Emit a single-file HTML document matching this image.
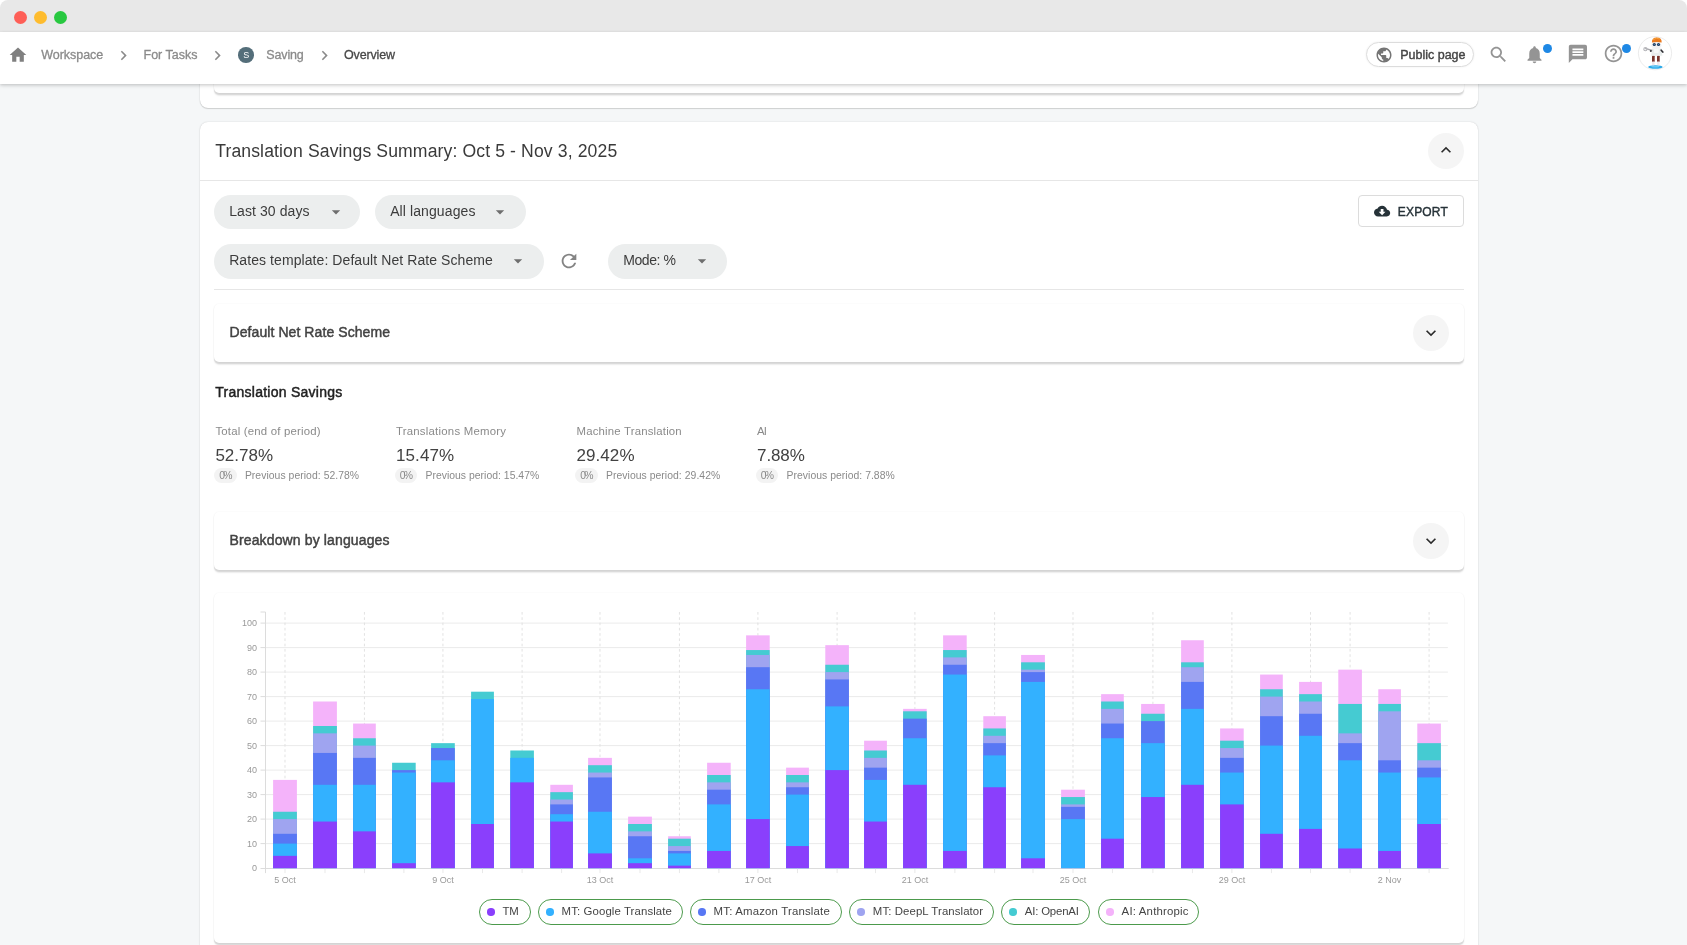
<!DOCTYPE html>
<html lang="en"><head><meta charset="utf-8"><title>Translation Savings Summary</title>
<style>
html,body{margin:0;padding:0;overflow:hidden}
#app{position:absolute;left:0;top:0;width:1687px;height:945px;overflow:hidden;background:#f5f7f8;-webkit-font-smoothing:antialiased}
body{width:1687px;height:945px;overflow:hidden;background:#f5f7f8;position:relative;font-family:'Liberation Sans', sans-serif}
.t{position:absolute;white-space:nowrap;font-family:'Liberation Sans', sans-serif}
.ic{position:absolute;display:block;overflow:visible}
</style></head><body>
<div id="app">
<div style="position:absolute;left:0;top:0;width:1687px;height:20px;background:#fff"></div>
<div style="position:absolute;left:0;top:0;width:1687px;height:32px;background:#e8e8e8;border-radius:8px 8px 0 0"></div>
<div style="position:absolute;left:13.5px;top:10.5px;width:13px;height:13px;border-radius:50%;background:#fe5f57"></div>
<div style="position:absolute;left:33.5px;top:10.5px;width:13px;height:13px;border-radius:50%;background:#febc2e"></div>
<div style="position:absolute;left:53.5px;top:10.5px;width:13px;height:13px;border-radius:50%;background:#28c840"></div>
<div style="position:absolute;left:200px;top:40px;width:1278px;height:68px;background:#fff;border-radius:0 0 8px 8px;box-shadow:0 1px 1px rgba(0,0,0,.13),0 0 1.5px rgba(0,0,0,.2)"></div>
<div style="position:absolute;left:214px;top:40px;width:1250px;height:53px;background:#fff;border-radius:0 0 5px 5px;box-shadow:0 1.5px 1px rgba(0,0,0,.09),0 2.5px 1.5px rgba(0,0,0,.07),0 0 2px rgba(0,0,0,.06)"></div>
<div style="position:absolute;left:200px;top:122px;width:1278px;height:900px;background:#fff;border-radius:8px;box-shadow:0 1px 1px rgba(0,0,0,.13),0 0 1.5px rgba(0,0,0,.2)"></div>
<div style="position:absolute;left:0;top:32px;width:1687px;height:52px;background:#fff;box-shadow:0 1px 3px rgba(0,0,0,.16),0 2px 5px rgba(0,0,0,.08)"></div>
<svg class="ic" style="left:8px;top:45px" width="20" height="20" viewBox="0 0 24 24" ><path fill="#808080" d="M10 20v-6h4v6h5v-8h3L12 3 2 12h3v8z"/></svg>
<svg class="ic" style="left:114px;top:45.5px" width="19" height="19" viewBox="0 0 24 24" ><path fill="#8a8a8a" d="M10 6L8.59 7.41 13.17 12l-4.58 4.59L10 18l6-6z"/></svg>
<svg class="ic" style="left:208px;top:45.5px" width="19" height="19" viewBox="0 0 24 24" ><path fill="#8a8a8a" d="M10 6L8.59 7.41 13.17 12l-4.58 4.59L10 18l6-6z"/></svg>
<div style="position:absolute;left:238.2px;top:47.1px;width:15.6px;height:15.6px;border-radius:50%;background:#546e7a"></div>
<svg class="ic" style="left:314.5px;top:45.5px" width="19" height="19" viewBox="0 0 24 24" ><path fill="#8a8a8a" d="M10 6L8.59 7.41 13.17 12l-4.58 4.59L10 18l6-6z"/></svg>
<div style="position:absolute;left:1366px;top:42px;width:106px;height:23px;border:1px solid #dcdcdc;border-radius:13px;box-shadow:0 0 2px rgba(0,0,0,.08)"></div>
<svg class="ic" style="left:1374.8px;top:45.8px" width="18" height="18" viewBox="0 0 24 24" ><path fill="#757575" d="M12 2C6.48 2 2 6.48 2 12s4.48 10 10 10 10-4.48 10-10S17.52 2 12 2zm-1 17.93c-3.95-.49-7-3.85-7-7.93 0-.62.08-1.21.21-1.79L9 15v1c0 1.1.9 2 2 2v1.93zm6.9-2.54c-.26-.81-1-1.39-1.9-1.39h-1v-3c0-.55-.45-1-1-1H8v-2h2c.55 0 1-.45 1-1V7h2c1.1 0 2-.9 2-2v-.41c2.93 1.19 5 4.06 5 7.41 0 2.08-.8 3.97-2.1 5.39z"/></svg>
<svg class="ic" style="left:1487.7px;top:43.5px" width="21" height="21" viewBox="0 0 24 24" ><path fill="#949494" d="M15.5 14h-.79l-.28-.27C15.41 12.59 16 11.11 16 9.5 16 5.91 13.09 3 9.5 3S3 5.91 3 9.5 5.91 16 9.5 16c1.61 0 3.09-.59 4.23-1.57l.27.28v.79l5 4.99L20.49 19l-4.99-5zm-6 0C7.01 14 5 11.99 5 9.5S7.01 5 9.5 5 14 7.01 14 9.5 11.99 14 9.5 14z"/></svg>
<svg class="ic" style="left:1523.7px;top:44px" width="21" height="21" viewBox="0 0 24 24" ><path fill="#949494" d="M12 22c1.1 0 2-.9 2-2h-4c0 1.1.89 2 2 2zm6-6v-5c0-3.07-1.64-5.64-4.5-6.32V4c0-.83-.67-1.5-1.5-1.5s-1.5.67-1.5 1.5v.68C7.63 5.36 6 7.92 6 11v5l-2 2v1h16v-1l-2-2z"/></svg>
<div style="position:absolute;left:1543px;top:44px;width:9px;height:9px;border-radius:50%;background:#1e88e5"></div>
<svg class="ic" style="left:1566.6px;top:43.2px" width="21.8" height="21.8" viewBox="0 0 24 24" ><path fill="#949494" d="M20 2H4c-1.1 0-1.99.9-1.99 2L2 22l4-4h14c1.1 0 2-.9 2-2V4c0-1.1-.9-2-2-2zM6 9h12v2H6V9zm12 5H6v-2h12v2zm0-6H6V6h12v2z"/></svg>
<svg class="ic" style="left:1603px;top:43.3px" width="21" height="21" viewBox="0 0 24 24" ><path fill="#949494" d="M11 18h2v-2h-2v2zm1-16C6.48 2 2 6.48 2 12s4.48 10 10 10 10-4.48 10-10S17.52 2 12 2zm0 18c-4.41 0-8-3.59-8-8s3.59-8 8-8 8 3.59 8 8-3.59 8-8 8zm0-14c-2.21 0-4 1.79-4 4h2c0-1.1.9-2 2-2s2 .9 2 2c0 2-3 1.75-3 5h2c0-2.25 3-2.5 3-5 0-2.21-1.79-4-4-4z"/></svg>
<div style="position:absolute;left:1622.3px;top:44px;width:9px;height:9px;border-radius:50%;background:#1e88e5"></div>
<svg class="ic" style="left:1638px;top:36px" width="34" height="34.5" viewBox="0 0 34 34.5">
<circle cx="17" cy="17.2" r="16.6" fill="#fff" stroke="#ececec" stroke-width="1"/>
<ellipse cx="17.4" cy="31" rx="7.2" ry="1.7" fill="#2aa9e9"/>
<ellipse cx="17.4" cy="30.6" rx="4" ry="1" fill="#66c6f2"/>
<rect x="14" y="19.5" width="2.7" height="6.6" rx=".8" fill="#7a342c"/><rect x="19" y="19.5" width="2.7" height="6.6" rx=".8" fill="#7a342c"/>
<rect x="14.1" y="25.6" width="2.5" height="3.6" rx=".8" fill="#efe6ea"/><rect x="19.1" y="25.6" width="2.5" height="3.6" rx=".8" fill="#efe6ea"/>
<path d="M14 12.5 h9.6 l.8 7.2 h-11.2 z" fill="#e9eded"/>
<rect x="15.8" y="13" width="5" height="4" rx="1" fill="#f6f8f8"/>
<path d="M13.6 14.3 L7.8 12.6" stroke="#a9a9ad" stroke-width="1.5" fill="none" stroke-linecap="round"/>
<circle cx="7.4" cy="13.2" r="1.6" fill="none" stroke="#b5b5b9" stroke-width="1.1"/>
<circle cx="12.8" cy="14.9" r="1" fill="#3a3a40"/>
<path d="M23.2 14.2 l1.6 1.8" stroke="#2e2e34" stroke-width="1.7" stroke-linecap="round"/>
<ellipse cx="18.4" cy="9.2" rx="5" ry="3.9" fill="#f1f1f3"/>
<circle cx="16.3" cy="8.5" r="1.6" fill="#1f3a5c"/><circle cx="20.5" cy="8.5" r="1.6" fill="#1f3a5c"/>
<circle cx="16.3" cy="8.5" r=".6" fill="#4f86b8"/><circle cx="20.5" cy="8.5" r=".6" fill="#4f86b8"/>
<path d="M13.9 6.6 q-.2 -5 4.9 -5 q5.1 0 4.9 5 q-4.9 -1.2 -9.8 0z" fill="#ea7a1e"/>
<path d="M15.4 3.4 q3 -2.2 6 -.6" stroke="#f6a23a" stroke-width="1" fill="none" stroke-linecap="round"/>
</svg>
<div style="position:absolute;left:200px;top:180px;width:1278px;height:1px;background:#e6e6e6"></div>
<div style="position:absolute;left:1428.4px;top:132.6px;width:36px;height:36px;border-radius:50%;background:#f5f5f5"></div>
<svg class="ic" style="left:1436px;top:139.5px" width="20" height="20" viewBox="0 0 24 24" ><path fill="#2b2b2b" d="M12 8l-6 6 1.41 1.41L12 10.83l4.59 4.58L18 14z"/></svg>
<div style="position:absolute;left:214px;top:195px;width:146px;height:34px;border-radius:17.25px;background:#eceeee"></div>
<svg class="ic" style="left:325.5px;top:201.5px" width="20" height="20" viewBox="0 0 24 24" ><path fill="#6e6e6e" d="M7 10l5 5 5-5z"/></svg>
<div style="position:absolute;left:375px;top:195px;width:151px;height:34px;border-radius:17.25px;background:#eceeee"></div>
<svg class="ic" style="left:490.4px;top:201.5px" width="20" height="20" viewBox="0 0 24 24" ><path fill="#6e6e6e" d="M7 10l5 5 5-5z"/></svg>
<div style="position:absolute;left:214px;top:244px;width:330px;height:34.5px;border-radius:17.25px;background:#eceeee"></div>
<svg class="ic" style="left:508.20000000000005px;top:250.5px" width="20" height="20" viewBox="0 0 24 24" ><path fill="#6e6e6e" d="M7 10l5 5 5-5z"/></svg>
<div style="position:absolute;left:608px;top:244px;width:119px;height:34.5px;border-radius:17.25px;background:#eceeee"></div>
<svg class="ic" style="left:692.2px;top:250.5px" width="20" height="20" viewBox="0 0 24 24" ><path fill="#6e6e6e" d="M7 10l5 5 5-5z"/></svg>
<svg class="ic" style="left:558px;top:250.3px" width="22" height="22" viewBox="0 0 24 24" ><path fill="#848484" d="M17.65 6.35C16.2 4.9 14.21 4 12 4c-4.42 0-7.99 3.58-7.99 8s3.57 8 7.99 8c3.73 0 6.84-2.55 7.73-6h-2.08c-.82 2.33-3.04 4-5.65 4-3.31 0-6-2.69-6-6s2.69-6 6-6c1.66 0 3.14.69 4.22 1.78L13 11h7V4l-2.35 2.35z"/></svg>
<div style="position:absolute;left:1358px;top:195px;width:104px;height:30px;border:1px solid #dcdcdc;border-radius:4px"></div>
<svg class="ic" style="left:1374px;top:202.5px" width="16.2" height="16.2" viewBox="0 0 24 24" ><path fill="#263238" d="M19.35 10.04C18.67 6.59 15.64 4 12 4 9.11 4 6.6 5.64 5.35 8.04 2.34 8.36 0 10.91 0 14c0 3.31 2.69 6 6 6h13c2.76 0 5-2.24 5-5 0-2.64-2.05-4.78-4.65-4.96zM17 13l-5 5-5-5h3V9h4v4h3z"/></svg>
<div style="position:absolute;left:214px;top:289px;width:1250px;height:1px;background:#e6e6e6"></div>
<div style="position:absolute;left:214px;top:304px;width:1250px;height:58px;background:#fff;border-radius:5px;box-shadow:0 1.5px 1px rgba(0,0,0,.09),0 2.5px 1.5px rgba(0,0,0,.07),0 0 2px rgba(0,0,0,.06)"></div>
<div style="position:absolute;left:1413px;top:314.5px;width:36px;height:36px;border-radius:50%;background:#f5f5f5"></div>
<svg class="ic" style="left:1421px;top:322.8px" width="20" height="20" viewBox="0 0 24 24" ><path fill="#2b2b2b" d="M16.59 8.59L12 13.17 7.41 8.59 6 10l6 6 6-6z"/></svg>
<div style="position:absolute;left:214px;top:512px;width:1250px;height:58px;background:#fff;border-radius:5px;box-shadow:0 1.5px 1px rgba(0,0,0,.09),0 2.5px 1.5px rgba(0,0,0,.07),0 0 2px rgba(0,0,0,.06)"></div>
<div style="position:absolute;left:1413px;top:522.5px;width:36px;height:36px;border-radius:50%;background:#f5f5f5"></div>
<svg class="ic" style="left:1421px;top:530.8px" width="20" height="20" viewBox="0 0 24 24" ><path fill="#2b2b2b" d="M16.59 8.59L12 13.17 7.41 8.59 6 10l6 6 6-6z"/></svg>
<div style="position:absolute;left:214.2px;top:468.3px;width:22.5px;height:15px;border-radius:7.5px;background:#f3f3f3"></div>
<div style="position:absolute;left:394.8px;top:468.3px;width:22.5px;height:15px;border-radius:7.5px;background:#f3f3f3"></div>
<div style="position:absolute;left:575.3px;top:468.3px;width:22.5px;height:15px;border-radius:7.5px;background:#f3f3f3"></div>
<div style="position:absolute;left:755.9px;top:468.3px;width:22.5px;height:15px;border-radius:7.5px;background:#f3f3f3"></div>
<div style="position:absolute;left:214px;top:592.7px;width:1250px;height:350.3px;background:#fff;border-radius:5px;box-shadow:0 1.5px 1px rgba(0,0,0,.09),0 2.5px 1.5px rgba(0,0,0,.07),0 0 2px rgba(0,0,0,.06)"></div>
<svg class="ic" style="left:0;top:0;will-change:transform" width="1687" height="945" viewBox="0 0 1687 945" font-family="Liberation Sans, sans-serif">
<line x1="265.5" x2="1447.9" y1="843.60" y2="843.60" stroke="#ebebeb" stroke-width="1"/>
<line x1="265.5" x2="1447.9" y1="819.10" y2="819.10" stroke="#ebebeb" stroke-width="1"/>
<line x1="265.5" x2="1447.9" y1="794.60" y2="794.60" stroke="#ebebeb" stroke-width="1"/>
<line x1="265.5" x2="1447.9" y1="770.10" y2="770.10" stroke="#ebebeb" stroke-width="1"/>
<line x1="265.5" x2="1447.9" y1="745.60" y2="745.60" stroke="#ebebeb" stroke-width="1"/>
<line x1="265.5" x2="1447.9" y1="721.10" y2="721.10" stroke="#ebebeb" stroke-width="1"/>
<line x1="265.5" x2="1447.9" y1="696.60" y2="696.60" stroke="#ebebeb" stroke-width="1"/>
<line x1="265.5" x2="1447.9" y1="672.10" y2="672.10" stroke="#ebebeb" stroke-width="1"/>
<line x1="265.5" x2="1447.9" y1="647.60" y2="647.60" stroke="#ebebeb" stroke-width="1"/>
<line x1="265.5" x2="1447.9" y1="623.10" y2="623.10" stroke="#ebebeb" stroke-width="1"/>
<line x1="285.00" x2="285.00" y1="612" y2="868.1" stroke="#dedede" stroke-width=".88" stroke-dasharray="2.64 2.64"/>
<line x1="364.45" x2="364.45" y1="612" y2="868.1" stroke="#dedede" stroke-width=".88" stroke-dasharray="2.64 2.64"/>
<line x1="442.95" x2="442.95" y1="612" y2="868.1" stroke="#dedede" stroke-width=".88" stroke-dasharray="2.64 2.64"/>
<line x1="522.10" x2="522.10" y1="612" y2="868.1" stroke="#dedede" stroke-width=".88" stroke-dasharray="2.64 2.64"/>
<line x1="600.00" x2="600.00" y1="612" y2="868.1" stroke="#dedede" stroke-width=".88" stroke-dasharray="2.64 2.64"/>
<line x1="679.45" x2="679.45" y1="612" y2="868.1" stroke="#dedede" stroke-width=".88" stroke-dasharray="2.64 2.64"/>
<line x1="757.90" x2="757.90" y1="612" y2="868.1" stroke="#dedede" stroke-width=".88" stroke-dasharray="2.64 2.64"/>
<line x1="837.10" x2="837.10" y1="612" y2="868.1" stroke="#dedede" stroke-width=".88" stroke-dasharray="2.64 2.64"/>
<line x1="914.90" x2="914.90" y1="612" y2="868.1" stroke="#dedede" stroke-width=".88" stroke-dasharray="2.64 2.64"/>
<line x1="994.60" x2="994.60" y1="612" y2="868.1" stroke="#dedede" stroke-width=".88" stroke-dasharray="2.64 2.64"/>
<line x1="1073.00" x2="1073.00" y1="612" y2="868.1" stroke="#dedede" stroke-width=".88" stroke-dasharray="2.64 2.64"/>
<line x1="1152.90" x2="1152.90" y1="612" y2="868.1" stroke="#dedede" stroke-width=".88" stroke-dasharray="2.64 2.64"/>
<line x1="1231.90" x2="1231.90" y1="612" y2="868.1" stroke="#dedede" stroke-width=".88" stroke-dasharray="2.64 2.64"/>
<line x1="1310.50" x2="1310.50" y1="612" y2="868.1" stroke="#dedede" stroke-width=".88" stroke-dasharray="2.64 2.64"/>
<line x1="1350.10" x2="1350.10" y1="612" y2="868.1" stroke="#dedede" stroke-width=".88" stroke-dasharray="2.64 2.64"/>
<line x1="1429.10" x2="1429.10" y1="612" y2="868.1" stroke="#dedede" stroke-width=".88" stroke-dasharray="2.64 2.64"/>
<line x1="265.5" x2="265.5" y1="612" y2="873.1" stroke="#dcdcdc" stroke-width="1"/>
<line x1="260.5" x2="1448.7" y1="868.5" y2="868.5" stroke="#dcdcdc" stroke-width="1"/>
<line x1="260.5" x2="265.5" y1="612" y2="612" stroke="#dcdcdc" stroke-width="1"/>
<line x1="260.5" x2="265.5" y1="843.60" y2="843.60" stroke="#dcdcdc" stroke-width="1"/>
<line x1="260.5" x2="265.5" y1="819.10" y2="819.10" stroke="#dcdcdc" stroke-width="1"/>
<line x1="260.5" x2="265.5" y1="794.60" y2="794.60" stroke="#dcdcdc" stroke-width="1"/>
<line x1="260.5" x2="265.5" y1="770.10" y2="770.10" stroke="#dcdcdc" stroke-width="1"/>
<line x1="260.5" x2="265.5" y1="745.60" y2="745.60" stroke="#dcdcdc" stroke-width="1"/>
<line x1="260.5" x2="265.5" y1="721.10" y2="721.10" stroke="#dcdcdc" stroke-width="1"/>
<line x1="260.5" x2="265.5" y1="696.60" y2="696.60" stroke="#dcdcdc" stroke-width="1"/>
<line x1="260.5" x2="265.5" y1="672.10" y2="672.10" stroke="#dcdcdc" stroke-width="1"/>
<line x1="260.5" x2="265.5" y1="647.60" y2="647.60" stroke="#dcdcdc" stroke-width="1"/>
<line x1="260.5" x2="265.5" y1="623.10" y2="623.10" stroke="#dcdcdc" stroke-width="1"/>
<line x1="285.00" x2="285.00" y1="868.1" y2="873.1" stroke="#e9e9e9" stroke-width="1"/>
<line x1="325.00" x2="325.00" y1="868.1" y2="873.1" stroke="#e9e9e9" stroke-width="1"/>
<line x1="364.45" x2="364.45" y1="868.1" y2="873.1" stroke="#e9e9e9" stroke-width="1"/>
<line x1="403.90" x2="403.90" y1="868.1" y2="873.1" stroke="#e9e9e9" stroke-width="1"/>
<line x1="442.95" x2="442.95" y1="868.1" y2="873.1" stroke="#e9e9e9" stroke-width="1"/>
<line x1="482.50" x2="482.50" y1="868.1" y2="873.1" stroke="#e9e9e9" stroke-width="1"/>
<line x1="522.10" x2="522.10" y1="868.1" y2="873.1" stroke="#e9e9e9" stroke-width="1"/>
<line x1="561.60" x2="561.60" y1="868.1" y2="873.1" stroke="#e9e9e9" stroke-width="1"/>
<line x1="600.00" x2="600.00" y1="868.1" y2="873.1" stroke="#e9e9e9" stroke-width="1"/>
<line x1="640.00" x2="640.00" y1="868.1" y2="873.1" stroke="#e9e9e9" stroke-width="1"/>
<line x1="679.45" x2="679.45" y1="868.1" y2="873.1" stroke="#e9e9e9" stroke-width="1"/>
<line x1="718.90" x2="718.90" y1="868.1" y2="873.1" stroke="#e9e9e9" stroke-width="1"/>
<line x1="757.90" x2="757.90" y1="868.1" y2="873.1" stroke="#e9e9e9" stroke-width="1"/>
<line x1="797.50" x2="797.50" y1="868.1" y2="873.1" stroke="#e9e9e9" stroke-width="1"/>
<line x1="837.10" x2="837.10" y1="868.1" y2="873.1" stroke="#e9e9e9" stroke-width="1"/>
<line x1="875.50" x2="875.50" y1="868.1" y2="873.1" stroke="#e9e9e9" stroke-width="1"/>
<line x1="914.90" x2="914.90" y1="868.1" y2="873.1" stroke="#e9e9e9" stroke-width="1"/>
<line x1="954.90" x2="954.90" y1="868.1" y2="873.1" stroke="#e9e9e9" stroke-width="1"/>
<line x1="994.60" x2="994.60" y1="868.1" y2="873.1" stroke="#e9e9e9" stroke-width="1"/>
<line x1="1033.00" x2="1033.00" y1="868.1" y2="873.1" stroke="#e9e9e9" stroke-width="1"/>
<line x1="1073.00" x2="1073.00" y1="868.1" y2="873.1" stroke="#e9e9e9" stroke-width="1"/>
<line x1="1112.45" x2="1112.45" y1="868.1" y2="873.1" stroke="#e9e9e9" stroke-width="1"/>
<line x1="1152.90" x2="1152.90" y1="868.1" y2="873.1" stroke="#e9e9e9" stroke-width="1"/>
<line x1="1192.45" x2="1192.45" y1="868.1" y2="873.1" stroke="#e9e9e9" stroke-width="1"/>
<line x1="1231.90" x2="1231.90" y1="868.1" y2="873.1" stroke="#e9e9e9" stroke-width="1"/>
<line x1="1271.45" x2="1271.45" y1="868.1" y2="873.1" stroke="#e9e9e9" stroke-width="1"/>
<line x1="1310.50" x2="1310.50" y1="868.1" y2="873.1" stroke="#e9e9e9" stroke-width="1"/>
<line x1="1350.10" x2="1350.10" y1="868.1" y2="873.1" stroke="#e9e9e9" stroke-width="1"/>
<line x1="1389.60" x2="1389.60" y1="868.1" y2="873.1" stroke="#e9e9e9" stroke-width="1"/>
<line x1="1429.10" x2="1429.10" y1="868.1" y2="873.1" stroke="#e9e9e9" stroke-width="1"/>
<rect x="273.1" y="779.90" width="23.8" height="88.20" fill="#f4b3fa"/>
<rect x="273.1" y="811.75" width="23.8" height="56.35" fill="#45cbd2"/>
<rect x="273.1" y="819.10" width="23.8" height="49.00" fill="#9fa4f0"/>
<rect x="273.1" y="833.80" width="23.8" height="34.30" fill="#5877f4"/>
<rect x="273.1" y="843.60" width="23.8" height="24.50" fill="#33b1ff"/>
<rect x="273.1" y="855.85" width="23.8" height="12.25" fill="#8a3ffc"/>
<rect x="313.1" y="701.50" width="23.8" height="166.60" fill="#f4b3fa"/>
<rect x="313.1" y="726.00" width="23.8" height="142.10" fill="#45cbd2"/>
<rect x="313.1" y="733.35" width="23.8" height="134.75" fill="#9fa4f0"/>
<rect x="313.1" y="752.95" width="23.8" height="115.15" fill="#5877f4"/>
<rect x="313.1" y="784.80" width="23.8" height="83.30" fill="#33b1ff"/>
<rect x="313.1" y="821.55" width="23.8" height="46.55" fill="#8a3ffc"/>
<rect x="353.1" y="723.55" width="22.7" height="144.55" fill="#f4b3fa"/>
<rect x="353.1" y="738.25" width="22.7" height="129.85" fill="#45cbd2"/>
<rect x="353.1" y="745.60" width="22.7" height="122.50" fill="#9fa4f0"/>
<rect x="353.1" y="757.85" width="22.7" height="110.25" fill="#5877f4"/>
<rect x="353.1" y="784.80" width="22.7" height="83.30" fill="#33b1ff"/>
<rect x="353.1" y="831.35" width="22.7" height="36.75" fill="#8a3ffc"/>
<rect x="392.1" y="762.75" width="23.6" height="105.35" fill="#45cbd2"/>
<rect x="392.1" y="770.10" width="23.6" height="98.00" fill="#5877f4"/>
<rect x="392.1" y="772.55" width="23.6" height="95.55" fill="#33b1ff"/>
<rect x="392.1" y="863.20" width="23.6" height="4.90" fill="#8a3ffc"/>
<rect x="431.1" y="743.15" width="23.7" height="124.95" fill="#45cbd2"/>
<rect x="431.1" y="748.05" width="23.7" height="120.05" fill="#5877f4"/>
<rect x="431.1" y="760.30" width="23.7" height="107.80" fill="#33b1ff"/>
<rect x="431.1" y="782.35" width="23.7" height="85.75" fill="#8a3ffc"/>
<rect x="471.1" y="691.70" width="22.8" height="176.40" fill="#45cbd2"/>
<rect x="471.1" y="699.05" width="22.8" height="169.05" fill="#33b1ff"/>
<rect x="471.1" y="824.00" width="22.8" height="44.10" fill="#8a3ffc"/>
<rect x="510.3" y="750.50" width="23.6" height="117.60" fill="#45cbd2"/>
<rect x="510.3" y="757.85" width="23.6" height="110.25" fill="#33b1ff"/>
<rect x="510.3" y="782.35" width="23.6" height="85.75" fill="#8a3ffc"/>
<rect x="550.3" y="784.80" width="22.6" height="83.30" fill="#f4b3fa"/>
<rect x="550.3" y="792.15" width="22.6" height="75.95" fill="#45cbd2"/>
<rect x="550.3" y="799.50" width="22.6" height="68.60" fill="#9fa4f0"/>
<rect x="550.3" y="804.40" width="22.6" height="63.70" fill="#5877f4"/>
<rect x="550.3" y="814.20" width="22.6" height="53.90" fill="#33b1ff"/>
<rect x="550.3" y="821.55" width="22.6" height="46.55" fill="#8a3ffc"/>
<rect x="588.1" y="757.85" width="23.8" height="110.25" fill="#f4b3fa"/>
<rect x="588.1" y="765.20" width="23.8" height="102.90" fill="#45cbd2"/>
<rect x="588.1" y="772.55" width="23.8" height="95.55" fill="#9fa4f0"/>
<rect x="588.1" y="777.45" width="23.8" height="90.65" fill="#5877f4"/>
<rect x="588.1" y="811.75" width="23.8" height="56.35" fill="#33b1ff"/>
<rect x="588.1" y="853.40" width="23.8" height="14.70" fill="#8a3ffc"/>
<rect x="628.1" y="816.65" width="23.8" height="51.45" fill="#f4b3fa"/>
<rect x="628.1" y="824.00" width="23.8" height="44.10" fill="#45cbd2"/>
<rect x="628.1" y="831.35" width="23.8" height="36.75" fill="#9fa4f0"/>
<rect x="628.1" y="836.25" width="23.8" height="31.85" fill="#5877f4"/>
<rect x="628.1" y="858.30" width="23.8" height="9.80" fill="#33b1ff"/>
<rect x="628.1" y="863.20" width="23.8" height="4.90" fill="#8a3ffc"/>
<rect x="668.1" y="836.25" width="22.7" height="31.85" fill="#f4b3fa"/>
<rect x="668.1" y="838.70" width="22.7" height="29.40" fill="#45cbd2"/>
<rect x="668.1" y="846.05" width="22.7" height="22.05" fill="#9fa4f0"/>
<rect x="668.1" y="850.95" width="22.7" height="17.15" fill="#5877f4"/>
<rect x="668.1" y="853.40" width="22.7" height="14.70" fill="#33b1ff"/>
<rect x="668.1" y="865.65" width="22.7" height="2.45" fill="#8a3ffc"/>
<rect x="707.1" y="762.75" width="23.6" height="105.35" fill="#f4b3fa"/>
<rect x="707.1" y="775.00" width="23.6" height="93.10" fill="#45cbd2"/>
<rect x="707.1" y="782.35" width="23.6" height="85.75" fill="#9fa4f0"/>
<rect x="707.1" y="789.70" width="23.6" height="78.40" fill="#5877f4"/>
<rect x="707.1" y="804.40" width="23.6" height="63.70" fill="#33b1ff"/>
<rect x="707.1" y="850.95" width="23.6" height="17.15" fill="#8a3ffc"/>
<rect x="746.1" y="635.35" width="23.6" height="232.75" fill="#f4b3fa"/>
<rect x="746.1" y="650.05" width="23.6" height="218.05" fill="#45cbd2"/>
<rect x="746.1" y="654.95" width="23.6" height="213.15" fill="#9fa4f0"/>
<rect x="746.1" y="667.20" width="23.6" height="200.90" fill="#5877f4"/>
<rect x="746.1" y="689.25" width="23.6" height="178.85" fill="#33b1ff"/>
<rect x="746.1" y="819.10" width="23.6" height="49.00" fill="#8a3ffc"/>
<rect x="786.1" y="767.65" width="22.8" height="100.45" fill="#f4b3fa"/>
<rect x="786.1" y="775.00" width="22.8" height="93.10" fill="#45cbd2"/>
<rect x="786.1" y="782.35" width="22.8" height="85.75" fill="#9fa4f0"/>
<rect x="786.1" y="787.25" width="22.8" height="80.85" fill="#5877f4"/>
<rect x="786.1" y="794.60" width="22.8" height="73.50" fill="#33b1ff"/>
<rect x="786.1" y="846.05" width="22.8" height="22.05" fill="#8a3ffc"/>
<rect x="825.3" y="645.15" width="23.6" height="222.95" fill="#f4b3fa"/>
<rect x="825.3" y="664.75" width="23.6" height="203.35" fill="#45cbd2"/>
<rect x="825.3" y="672.10" width="23.6" height="196.00" fill="#9fa4f0"/>
<rect x="825.3" y="679.45" width="23.6" height="188.65" fill="#5877f4"/>
<rect x="825.3" y="706.40" width="23.6" height="161.70" fill="#33b1ff"/>
<rect x="825.3" y="770.10" width="23.6" height="98.00" fill="#8a3ffc"/>
<rect x="864.1" y="740.70" width="22.8" height="127.40" fill="#f4b3fa"/>
<rect x="864.1" y="750.50" width="22.8" height="117.60" fill="#45cbd2"/>
<rect x="864.1" y="757.85" width="22.8" height="110.25" fill="#9fa4f0"/>
<rect x="864.1" y="767.65" width="22.8" height="100.45" fill="#5877f4"/>
<rect x="864.1" y="779.90" width="22.8" height="88.20" fill="#33b1ff"/>
<rect x="864.1" y="821.55" width="22.8" height="46.55" fill="#8a3ffc"/>
<rect x="903.1" y="708.85" width="23.6" height="159.25" fill="#f4b3fa"/>
<rect x="903.1" y="711.30" width="23.6" height="156.80" fill="#45cbd2"/>
<rect x="903.1" y="718.65" width="23.6" height="149.45" fill="#5877f4"/>
<rect x="903.1" y="738.25" width="23.6" height="129.85" fill="#33b1ff"/>
<rect x="903.1" y="784.80" width="23.6" height="83.30" fill="#8a3ffc"/>
<rect x="943.1" y="635.35" width="23.6" height="232.75" fill="#f4b3fa"/>
<rect x="943.1" y="650.05" width="23.6" height="218.05" fill="#45cbd2"/>
<rect x="943.1" y="657.40" width="23.6" height="210.70" fill="#9fa4f0"/>
<rect x="943.1" y="664.75" width="23.6" height="203.35" fill="#5877f4"/>
<rect x="943.1" y="674.55" width="23.6" height="193.55" fill="#33b1ff"/>
<rect x="943.1" y="850.95" width="23.6" height="17.15" fill="#8a3ffc"/>
<rect x="983.3" y="716.20" width="22.6" height="151.90" fill="#f4b3fa"/>
<rect x="983.3" y="728.45" width="22.6" height="139.65" fill="#45cbd2"/>
<rect x="983.3" y="735.80" width="22.6" height="132.30" fill="#9fa4f0"/>
<rect x="983.3" y="743.15" width="22.6" height="124.95" fill="#5877f4"/>
<rect x="983.3" y="755.40" width="22.6" height="112.70" fill="#33b1ff"/>
<rect x="983.3" y="787.25" width="22.6" height="80.85" fill="#8a3ffc"/>
<rect x="1021.1" y="654.95" width="23.8" height="213.15" fill="#f4b3fa"/>
<rect x="1021.1" y="662.30" width="23.8" height="205.80" fill="#45cbd2"/>
<rect x="1021.1" y="669.65" width="23.8" height="198.45" fill="#9fa4f0"/>
<rect x="1021.1" y="672.10" width="23.8" height="196.00" fill="#5877f4"/>
<rect x="1021.1" y="681.90" width="23.8" height="186.20" fill="#33b1ff"/>
<rect x="1021.1" y="858.30" width="23.8" height="9.80" fill="#8a3ffc"/>
<rect x="1061.1" y="789.70" width="23.8" height="78.40" fill="#f4b3fa"/>
<rect x="1061.1" y="797.05" width="23.8" height="71.05" fill="#45cbd2"/>
<rect x="1061.1" y="804.40" width="23.8" height="63.70" fill="#9fa4f0"/>
<rect x="1061.1" y="806.85" width="23.8" height="61.25" fill="#5877f4"/>
<rect x="1061.1" y="819.10" width="23.8" height="49.00" fill="#33b1ff"/>
<rect x="1101.1" y="694.15" width="22.7" height="173.95" fill="#f4b3fa"/>
<rect x="1101.1" y="701.50" width="22.7" height="166.60" fill="#45cbd2"/>
<rect x="1101.1" y="708.85" width="22.7" height="159.25" fill="#9fa4f0"/>
<rect x="1101.1" y="723.55" width="22.7" height="144.55" fill="#5877f4"/>
<rect x="1101.1" y="738.25" width="22.7" height="129.85" fill="#33b1ff"/>
<rect x="1101.1" y="838.70" width="22.7" height="29.40" fill="#8a3ffc"/>
<rect x="1141.1" y="703.95" width="23.6" height="164.15" fill="#f4b3fa"/>
<rect x="1141.1" y="713.75" width="23.6" height="154.35" fill="#45cbd2"/>
<rect x="1141.1" y="721.10" width="23.6" height="147.00" fill="#5877f4"/>
<rect x="1141.1" y="743.15" width="23.6" height="124.95" fill="#33b1ff"/>
<rect x="1141.1" y="797.05" width="23.6" height="71.05" fill="#8a3ffc"/>
<rect x="1181.1" y="640.25" width="22.7" height="227.85" fill="#f4b3fa"/>
<rect x="1181.1" y="662.30" width="22.7" height="205.80" fill="#45cbd2"/>
<rect x="1181.1" y="667.20" width="22.7" height="200.90" fill="#9fa4f0"/>
<rect x="1181.1" y="681.90" width="22.7" height="186.20" fill="#5877f4"/>
<rect x="1181.1" y="708.85" width="22.7" height="159.25" fill="#33b1ff"/>
<rect x="1181.1" y="784.80" width="22.7" height="83.30" fill="#8a3ffc"/>
<rect x="1220.1" y="728.45" width="23.6" height="139.65" fill="#f4b3fa"/>
<rect x="1220.1" y="740.70" width="23.6" height="127.40" fill="#45cbd2"/>
<rect x="1220.1" y="748.05" width="23.6" height="120.05" fill="#9fa4f0"/>
<rect x="1220.1" y="757.85" width="23.6" height="110.25" fill="#5877f4"/>
<rect x="1220.1" y="772.55" width="23.6" height="95.55" fill="#33b1ff"/>
<rect x="1220.1" y="804.40" width="23.6" height="63.70" fill="#8a3ffc"/>
<rect x="1260.1" y="674.55" width="22.7" height="193.55" fill="#f4b3fa"/>
<rect x="1260.1" y="689.25" width="22.7" height="178.85" fill="#45cbd2"/>
<rect x="1260.1" y="696.60" width="22.7" height="171.50" fill="#9fa4f0"/>
<rect x="1260.1" y="716.20" width="22.7" height="151.90" fill="#5877f4"/>
<rect x="1260.1" y="745.60" width="22.7" height="122.50" fill="#33b1ff"/>
<rect x="1260.1" y="833.80" width="22.7" height="34.30" fill="#8a3ffc"/>
<rect x="1299.1" y="681.90" width="22.8" height="186.20" fill="#f4b3fa"/>
<rect x="1299.1" y="694.15" width="22.8" height="173.95" fill="#45cbd2"/>
<rect x="1299.1" y="701.50" width="22.8" height="166.60" fill="#9fa4f0"/>
<rect x="1299.1" y="713.75" width="22.8" height="154.35" fill="#5877f4"/>
<rect x="1299.1" y="735.80" width="22.8" height="132.30" fill="#33b1ff"/>
<rect x="1299.1" y="828.90" width="22.8" height="39.20" fill="#8a3ffc"/>
<rect x="1338.3" y="669.65" width="23.6" height="198.45" fill="#f4b3fa"/>
<rect x="1338.3" y="703.95" width="23.6" height="164.15" fill="#45cbd2"/>
<rect x="1338.3" y="733.35" width="23.6" height="134.75" fill="#9fa4f0"/>
<rect x="1338.3" y="743.15" width="23.6" height="124.95" fill="#5877f4"/>
<rect x="1338.3" y="760.30" width="23.6" height="107.80" fill="#33b1ff"/>
<rect x="1338.3" y="848.50" width="23.6" height="19.60" fill="#8a3ffc"/>
<rect x="1378.3" y="689.25" width="22.6" height="178.85" fill="#f4b3fa"/>
<rect x="1378.3" y="703.95" width="22.6" height="164.15" fill="#45cbd2"/>
<rect x="1378.3" y="711.30" width="22.6" height="156.80" fill="#9fa4f0"/>
<rect x="1378.3" y="760.30" width="22.6" height="107.80" fill="#5877f4"/>
<rect x="1378.3" y="772.55" width="22.6" height="95.55" fill="#33b1ff"/>
<rect x="1378.3" y="850.95" width="22.6" height="17.15" fill="#8a3ffc"/>
<rect x="1417.3" y="723.55" width="23.6" height="144.55" fill="#f4b3fa"/>
<rect x="1417.3" y="743.15" width="23.6" height="124.95" fill="#45cbd2"/>
<rect x="1417.3" y="760.30" width="23.6" height="107.80" fill="#9fa4f0"/>
<rect x="1417.3" y="767.65" width="23.6" height="100.45" fill="#5877f4"/>
<rect x="1417.3" y="777.45" width="23.6" height="90.65" fill="#33b1ff"/>
<rect x="1417.3" y="824.00" width="23.6" height="44.10" fill="#8a3ffc"/>
<text x="257" y="871.30" text-anchor="end" font-size="9" fill="#999">0</text>
<text x="257" y="846.80" text-anchor="end" font-size="9" fill="#999">10</text>
<text x="257" y="822.30" text-anchor="end" font-size="9" fill="#999">20</text>
<text x="257" y="797.80" text-anchor="end" font-size="9" fill="#999">30</text>
<text x="257" y="773.30" text-anchor="end" font-size="9" fill="#999">40</text>
<text x="257" y="748.80" text-anchor="end" font-size="9" fill="#999">50</text>
<text x="257" y="724.30" text-anchor="end" font-size="9" fill="#999">60</text>
<text x="257" y="699.80" text-anchor="end" font-size="9" fill="#999">70</text>
<text x="257" y="675.30" text-anchor="end" font-size="9" fill="#999">80</text>
<text x="257" y="650.80" text-anchor="end" font-size="9" fill="#999">90</text>
<text x="257" y="626.30" text-anchor="end" font-size="9" fill="#999">100</text>
<text x="285.00" y="882.8" text-anchor="middle" font-size="9" fill="#999">5 Oct</text>
<text x="442.95" y="882.8" text-anchor="middle" font-size="9" fill="#999">9 Oct</text>
<text x="600.00" y="882.8" text-anchor="middle" font-size="9" fill="#999">13 Oct</text>
<text x="757.90" y="882.8" text-anchor="middle" font-size="9" fill="#999">17 Oct</text>
<text x="914.90" y="882.8" text-anchor="middle" font-size="9" fill="#999">21 Oct</text>
<text x="1073.00" y="882.8" text-anchor="middle" font-size="9" fill="#999">25 Oct</text>
<text x="1231.90" y="882.8" text-anchor="middle" font-size="9" fill="#999">29 Oct</text>
<text x="1389.60" y="882.8" text-anchor="middle" font-size="9" fill="#999">2 Nov</text>
</svg>
<div style="position:absolute;left:479px;top:899px;width:50px;height:24px;border:1px solid #4c9a4c;border-radius:13px"></div>
<div style="position:absolute;left:487.2px;top:908px;width:7.5px;height:7.5px;border-radius:50%;background:#8a3ffc"></div>
<div style="position:absolute;left:538px;top:899px;width:142.7px;height:24px;border:1px solid #4c9a4c;border-radius:13px"></div>
<div style="position:absolute;left:546.2px;top:908px;width:7.5px;height:7.5px;border-radius:50%;background:#33b1ff"></div>
<div style="position:absolute;left:690px;top:899px;width:149.5px;height:24px;border:1px solid #4c9a4c;border-radius:13px"></div>
<div style="position:absolute;left:698.2px;top:908px;width:7.5px;height:7.5px;border-radius:50%;background:#5877f4"></div>
<div style="position:absolute;left:849.2px;top:899px;width:142.5px;height:24px;border:1px solid #4c9a4c;border-radius:13px"></div>
<div style="position:absolute;left:857.4000000000001px;top:908px;width:7.5px;height:7.5px;border-radius:50%;background:#9fa4f0"></div>
<div style="position:absolute;left:1001.2px;top:899px;width:86.5px;height:24px;border:1px solid #4c9a4c;border-radius:13px"></div>
<div style="position:absolute;left:1009.4000000000001px;top:908px;width:7.5px;height:7.5px;border-radius:50%;background:#45cbd2"></div>
<div style="position:absolute;left:1098px;top:899px;width:98.7px;height:24px;border:1px solid #4c9a4c;border-radius:13px"></div>
<div style="position:absolute;left:1106.2px;top:908px;width:7.5px;height:7.5px;border-radius:50%;background:#f4b3fa"></div>
<div style="position:absolute;left:0;top:0;width:1687px;height:945px;will-change:transform">
<span class="t" id="bc1" style="left:41.30px;top:48px;font-size:12.5px;line-height:14px;height:14px;color:#8a8a8a;letter-spacing:-0.038px;font-weight:500;-webkit-text-stroke:.3px #8a8a8a">Workspace</span>
<span class="t" id="bc2" style="left:143.50px;top:48px;font-size:12.5px;line-height:14px;height:14px;color:#8a8a8a;letter-spacing:0.005px;-webkit-text-stroke:.3px #8a8a8a">For Tasks</span>
<span class="t" id="bcS" style="left:243.30px;top:50px;font-size:9px;line-height:10px;height:10px;color:#fff;letter-spacing:0.000px;">S</span>
<span class="t" id="bc3" style="left:266.30px;top:48px;font-size:12.5px;line-height:14px;height:14px;color:#8a8a8a;letter-spacing:-0.145px;-webkit-text-stroke:.3px #8a8a8a">Saving</span>
<span class="t" id="bc4" style="left:344.00px;top:48px;font-size:12.5px;line-height:14px;height:14px;color:#484848;letter-spacing:-0.158px;-webkit-text-stroke:.3px #484848">Overview</span>
<span class="t" id="pp" style="left:1400.30px;top:48px;font-size:12.5px;line-height:14px;height:14px;color:#444;letter-spacing:-0.013px;-webkit-text-stroke:.4px #444">Public page</span>
<span class="t" id="title" style="left:215.20px;top:141px;font-size:17.6px;line-height:20px;height:20px;color:#3a3a3a;letter-spacing:0.120px;">Translation Savings Summary: Oct 5 - Nov 3, 2025</span>
<span class="t" id="p1" style="left:229.20px;top:203px;font-size:14px;line-height:16px;height:16px;color:#3c3c3c;letter-spacing:0.082px;">Last 30 days</span>
<span class="t" id="p2" style="left:390.20px;top:203px;font-size:14px;line-height:16px;height:16px;color:#3c3c3c;letter-spacing:0.095px;">All languages</span>
<span class="t" id="p3" style="left:229.20px;top:252px;font-size:14px;line-height:16px;height:16px;color:#3c3c3c;letter-spacing:0.077px;">Rates template: Default Net Rate Scheme</span>
<span class="t" id="p4" style="left:623.20px;top:252px;font-size:14px;line-height:16px;height:16px;color:#3c3c3c;letter-spacing:-0.410px;">Mode: %</span>
<span class="t" id="exp" style="left:1397.80px;top:205px;font-size:12px;line-height:14px;height:14px;color:#263238;letter-spacing:0.172px;-webkit-text-stroke:.4px #263238">EXPORT</span>
<span class="t" id="ac1" style="left:229.50px;top:324px;font-size:14px;line-height:16px;height:16px;color:#424242;letter-spacing:0.079px;-webkit-text-stroke:.45px #424242">Default Net Rate Scheme</span>
<span class="t" id="ac2" style="left:229.50px;top:532px;font-size:14px;line-height:16px;height:16px;color:#424242;letter-spacing:0.132px;-webkit-text-stroke:.45px #424242">Breakdown by languages</span>
<span class="t" id="ts" style="left:215.30px;top:384px;font-size:14px;line-height:16px;height:16px;color:#212121;letter-spacing:0.253px;-webkit-text-stroke:.45px #212121">Translation Savings</span>
<span class="t" id="sl0" style="left:215.40px;top:425px;font-size:11.4px;line-height:12px;height:12px;color:#8a8a8a;letter-spacing:0.194px;">Total (end of period)</span>
<span class="t" id="sv0" style="left:215.40px;top:446px;font-size:17px;line-height:19px;height:19px;color:#424242;letter-spacing:0.027px;">52.78%</span>
<span class="t" id="sc0" style="left:219.20px;top:470px;font-size:10.4px;line-height:11px;height:11px;color:#8a8a8a;letter-spacing:-1.825px;">0%</span>
<span class="t" id="sp0" style="left:244.90px;top:470px;font-size:10.4px;line-height:11px;height:11px;color:#8a8a8a;letter-spacing:0.045px;">Previous period: 52.78%</span>
<span class="t" id="sl1" style="left:395.95px;top:425px;font-size:11.4px;line-height:12px;height:12px;color:#8a8a8a;letter-spacing:0.232px;">Translations Memory</span>
<span class="t" id="sv1" style="left:395.95px;top:446px;font-size:17px;line-height:19px;height:19px;color:#424242;letter-spacing:0.128px;">15.47%</span>
<span class="t" id="sc1" style="left:399.75px;top:470px;font-size:10.4px;line-height:11px;height:11px;color:#8a8a8a;letter-spacing:-1.825px;">0%</span>
<span class="t" id="sp1" style="left:425.45px;top:470px;font-size:10.4px;line-height:11px;height:11px;color:#8a8a8a;letter-spacing:0.026px;">Previous period: 15.47%</span>
<span class="t" id="sl2" style="left:576.50px;top:425px;font-size:11.4px;line-height:12px;height:12px;color:#8a8a8a;letter-spacing:0.181px;">Machine Translation</span>
<span class="t" id="sv2" style="left:576.50px;top:446px;font-size:17px;line-height:19px;height:19px;color:#424242;letter-spacing:0.068px;">29.42%</span>
<span class="t" id="sc2" style="left:580.30px;top:470px;font-size:10.4px;line-height:11px;height:11px;color:#8a8a8a;letter-spacing:-1.825px;">0%</span>
<span class="t" id="sp2" style="left:606.00px;top:470px;font-size:10.4px;line-height:11px;height:11px;color:#8a8a8a;letter-spacing:0.045px;">Previous period: 29.42%</span>
<span class="t" id="sl3" style="left:757.05px;top:425px;font-size:11.4px;line-height:12px;height:12px;color:#8a8a8a;letter-spacing:-0.770px;">AI</span>
<span class="t" id="sv3" style="left:757.05px;top:446px;font-size:17px;line-height:19px;height:19px;color:#424242;letter-spacing:-0.105px;">7.88%</span>
<span class="t" id="sc3" style="left:760.85px;top:470px;font-size:10.4px;line-height:11px;height:11px;color:#8a8a8a;letter-spacing:-1.825px;">0%</span>
<span class="t" id="sp3" style="left:786.55px;top:470px;font-size:10.4px;line-height:11px;height:11px;color:#8a8a8a;letter-spacing:0.036px;">Previous period: 7.88%</span>
<span class="t" id="lg0" style="left:502.60px;top:905px;font-size:11.4px;line-height:12px;height:12px;color:#444;letter-spacing:-0.350px;">TM</span>
<span class="t" id="lg1" style="left:561.60px;top:905px;font-size:11.4px;line-height:12px;height:12px;color:#444;letter-spacing:0.107px;">MT: Google Translate</span>
<span class="t" id="lg2" style="left:713.60px;top:905px;font-size:11.4px;line-height:12px;height:12px;color:#444;letter-spacing:0.185px;">MT: Amazon Translate</span>
<span class="t" id="lg3" style="left:872.80px;top:905px;font-size:11.4px;line-height:12px;height:12px;color:#444;letter-spacing:0.096px;">MT: DeepL Translator</span>
<span class="t" id="lg4" style="left:1024.80px;top:905px;font-size:11.4px;line-height:12px;height:12px;color:#444;letter-spacing:-0.181px;">AI: OpenAI</span>
<span class="t" id="lg5" style="left:1121.60px;top:905px;font-size:11.4px;line-height:12px;height:12px;color:#444;letter-spacing:0.192px;">AI: Anthropic</span>
</div>
</div>
</body></html>
